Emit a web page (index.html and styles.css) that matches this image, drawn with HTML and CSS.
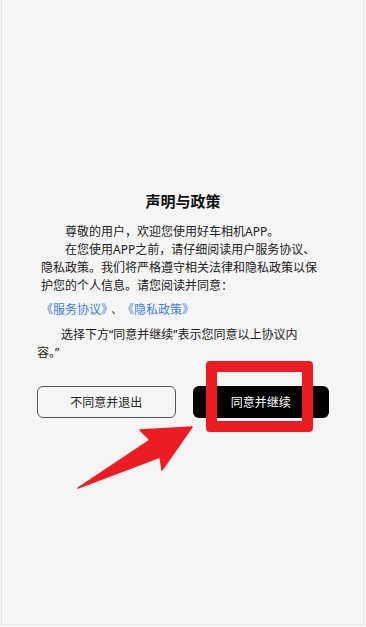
FILE: index.html
```html
<!doctype html>
<html lang="zh-CN">
  <head>
    <meta charset="UTF-8" />
    <meta name="viewport" content="width=device-width, initial-scale=1.0" />
    <title>声明与政策</title>
    <link rel="stylesheet" href="styles.css">
  </head>
  <body>
    <div class="screen">
      <div class="policy">
        <h1 class="policy-title">声明与政策</h1>

        <div class="policy-text">
          <p class="indent">尊敬的用户，欢迎您使用好车相机APP。</p>
          <p class="indent">在您使用APP之前，请仔细阅读用户服务协议、隐私政策。我们将严格遵守相关法律和隐私政策以保护您的个人信息。请您阅读并同意：</p>
          <p class="links">
            <a href="#">《服务协议》</a><span class="sep">、</span><a href="#">《隐私政策》</a>
          </p>
        </div>

        <p class="indent policy-note">选择下方“同意并继续”表示您同意以上协议内容。”</p>

        <div class="policy-actions">
          <button class="btn btn-outline" type="button">不同意并退出</button>
          <button class="btn btn-dark" type="button">同意并继续</button>
        </div>
      </div>
    </div>

    <!-- annotation drawn over the screenshot -->
    <div class="mark-box"></div>
    <svg class="mark-arrow" width="366" height="627" viewBox="0 0 366 627">
      <polygon points="192,427 140,430 150,440 78,488 160,457 162,470"
               fill="#ec1c24" stroke="#ec1c24" stroke-width="1.5" stroke-linejoin="round" />
    </svg>
  </body>
</html>
```

FILE: styles.css
```css
* {
  margin: 0;
  padding: 0;
  box-sizing: border-box;
  font-family: "Noto Sans", "Noto Sans CJK SC", sans-serif;
}

body {
  width: 366px;
  height: 627px;
  background: #f5f5f5;
  overflow: hidden;
}

.screen {
  width: 363px;
  height: 625px;
  margin-left: 1px;
  border: solid #e6e6e6;
  border-width: 0 1px 1px;
  padding: 190px 34px 0 35px;
}

.policy-title {
  font-size: 15px;
  font-weight: 700;
  line-height: 22px;
  text-align: center;
  color: #111;
}

.policy-text {
  margin-top: 11px;
  padding: 0 3px 0 4px;
  font-size: 12px;
  line-height: 18px;
  color: #222;
}

.indent {
  text-indent: 24px;
}

.links {
  margin-top: 6px;
}

.links a {
  color: #3b7fdd;
  text-decoration: none;
}

.links .sep {
  margin: 0 5px 0 4px;
  color: #555;
}

.policy-note {
  margin-top: 7px;
  padding-right: 20px;
  font-size: 12px;
  line-height: 18px;
  color: #222;
}

.policy-actions {
  display: flex;
  gap: 17px;
  margin-top: 24px;
}

.btn {
  flex: 1;
  height: 32px;
  border-radius: 6px;
  font-size: 12px;
  cursor: pointer;
}

.btn-outline {
  background: transparent;
  border: 1px solid #555;
  color: #222;
}

.btn-dark {
  background: #000;
  border: none;
  color: #fff;
}

.mark-box {
  position: absolute;
  left: 206px;
  top: 361px;
  width: 107px;
  height: 71px;
  border: 11px solid #ec1c24;
  border-radius: 4px;
}

.mark-arrow {
  position: absolute;
  left: 0;
  top: 0;
  pointer-events: none;
}
```
